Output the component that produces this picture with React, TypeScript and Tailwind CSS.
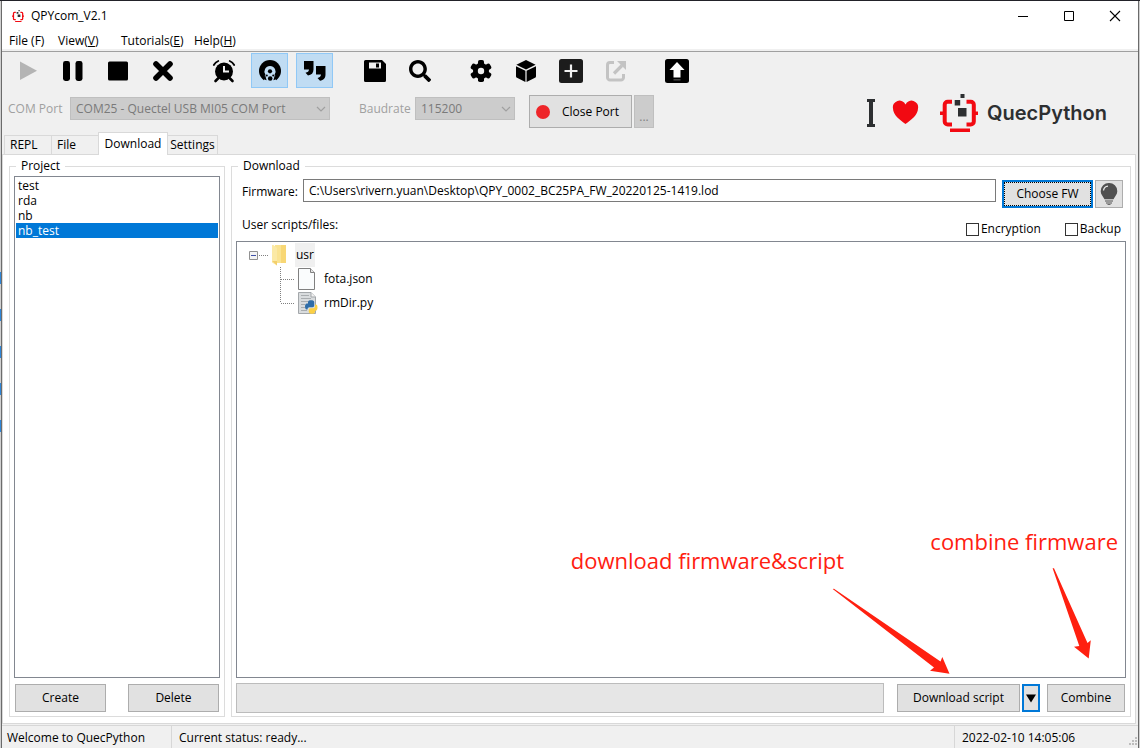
import { useState } from "react";
import type { ReactNode } from "react";
import { FaSearch } from "react-icons/fa";

const PUSH =
  "flex items-center justify-center border border-[#adadad] bg-[#e1e1e1] text-[12px] leading-4 whitespace-nowrap";

type Tool = { name: string; icon: ReactNode; active?: boolean; disabled?: boolean };

const PlayIcon = () => (
  <svg width="24" height="24" viewBox="0 0 24 24">
    <path d="M4 2.5v18.5l17-9.2z" fill="#b4b4b4" />
  </svg>
);
const PauseIcon = () => (
  <svg width="24" height="24" viewBox="0 0 24 24">
    <rect x="2" y="2" width="7" height="20" rx="2.4" />
    <rect x="14.5" y="2" width="7" height="20" rx="2.4" />
  </svg>
);
const StopIcon = () => (
  <svg width="24" height="24" viewBox="0 0 24 24">
    <rect x="2" y="2.5" width="20" height="19" rx="1.5" />
  </svg>
);
const CrossIcon = () => (
  <svg width="24" height="24" viewBox="0 0 24 24">
    <path d="M5 5l14 14M19 5L5 19" stroke="#000" strokeWidth="5.600" strokeLinecap="round" />
  </svg>
);
const AlarmIcon = () => (
  <svg width="24" height="24" viewBox="0 0 24 24">
    <circle cx="12" cy="12.500" r="9" />
    <path d="M6 19.500l-2.500 2.500M18 19.500l2.500 2.500" stroke="#000" strokeWidth="2.600" strokeLinecap="round" />
    <path d="M1.800 6a9 9 0 0 1 4.500-4M22.200 6a9 9 0 0 0-4.500-4" fill="none" stroke="#000" strokeWidth="1.800" strokeLinecap="round" />
    <path d="M12 7v5.500h5" fill="none" stroke="#f0f0f0" strokeWidth="2" />
  </svg>
);
const HeadIcon = () => (
  <svg width="24" height="24" viewBox="0 0 24 24">
    <circle cx="12" cy="12" r="11" />
    <path d="M12 7a5.600 5.600 0 0 0-4.600 8.800c-1.200 1.400-1.700 3-1.400 5.200V24h12v-3c.3-2.200-.2-3.800-1.400-5.200A5.600 5.600 0 0 0 12 7z" fill="#c0dcf3" />
    <path d="M7 15.500l1.600 5.800-3.800-1.300zM17 15.500l-1.600 5.800 3.800-1.300z" />
    <circle cx="12" cy="12.300" r="2.100" />
    <circle cx="8.800" cy="16.500" r="1" />
    <circle cx="15.200" cy="16.500" r="1" />
    <circle cx="12.200" cy="19.500" r="2.300" />
  </svg>
);
const QuotesIcon = () => (
  <svg width="24" height="24" viewBox="0 0 24 24">
    <path d="M1 2h9.500v8.500c0 3.500-2 5.500-5.500 6L2.500 13.700c2.300-.3 3.300-1.400 3.500-3.200H1zM13 7h9.500v8.500c0 3.500-2 5.800-5.500 6.300L14.500 19c2.300-.4 3.300-1.600 3.500-3.500h-5z" />
  </svg>
);
const SaveIcon = () => (
  <svg width="24" height="24" viewBox="0 0 24 24">
    <path d="M2.500 1H19l4 4v16.500a1.500 1.500 0 0 1-1.500 1.500h-19A1.500 1.500 0 0 1 1 21.500v-19A1.500 1.500 0 0 1 2.500 1z" />
    <path d="M6 3.500h12v6H6z" fill="#efefef" />
    <path d="M13 4.500h3v4h-3z" />
  </svg>
);
const GearIcon = () => (
  <svg width="24" height="24" viewBox="0 0 24 24">
    <circle cx="12" cy="12" r="8" />
    {[0, 60, 120].map((angle) => (
      <rect key={angle} x="9" y="1" width="6" height="22" rx="1.800" transform={`rotate(${angle} 12 12)`} />
    ))}
    <circle cx="12" cy="12" r="3.200" fill="#f0f0f0" />
  </svg>
);
const CubeIcon = () => (
  <svg width="24" height="24" viewBox="0 0 24 24">
    <path d="M12 1l9.600 4.800L12 10.500 2.400 5.800z" />
    <path d="M2 7.200l9.400 4.600V23L3 18.800a1.500 1.500 0 0 1-1-1.500zM22 7.200l-9.400 4.600V23l8.400-4.200a1.500 1.500 0 0 0 1-1.500z" />
  </svg>
);
const PlusIcon = () => (
  <svg width="24" height="24" viewBox="0 0 24 24">
    <rect width="24" height="24" rx="2.500" fill="#1c1c1c" />
    <path d="M12 5.500v13M5.500 12h13" stroke="#f0f0f0" strokeWidth="2.200" />
  </svg>
);
const ShareIcon = () => (
  <svg width="24" height="24" viewBox="0 0 24 24" fill="none" stroke="#c3c3c3">
    <path d="M10 3.500H6A2.500 2.500 0 0 0 3.500 6v12.500A2.500 2.500 0 0 0 6 21h11a2.500 2.500 0 0 0 2.500-2.500V15" strokeWidth="3" />
    <path d="M10 14.500L18 6.500" strokeWidth="3.200" />
    <path d="M13 2h9v9z" fill="#c3c3c3" stroke="none" />
  </svg>
);
const UploadIcon = () => (
  <svg width="24" height="24" viewBox="0 0 24 24">
    <rect width="24" height="24" rx="2.500" />
    <path d="M12 3l7.500 8h-4v7.500h-7V11h-4z" fill="#fff" />
    <path d="M8.500 20.800h7" stroke="#444" strokeWidth="1.500" />
  </svg>
);

const TOOL_GROUPS: Tool[][] = [
  [
    { name: "Run", icon: <PlayIcon />, disabled: true },
    { name: "Pause", icon: <PauseIcon /> },
    { name: "Stop", icon: <StopIcon /> },
    { name: "Clear", icon: <CrossIcon /> },
  ],
  [
    { name: "Timer", icon: <AlarmIcon /> },
    { name: "Connect", icon: <HeadIcon />, active: true },
    { name: "Quotes", icon: <QuotesIcon />, active: true },
  ],
  [
    { name: "Save", icon: <SaveIcon /> },
    { name: "Search", icon: <FaSearch size={22} /> },
  ],
  [
    { name: "Options", icon: <GearIcon /> },
    { name: "Package", icon: <CubeIcon /> },
    { name: "Add", icon: <PlusIcon /> },
    { name: "Export", icon: <ShareIcon />, disabled: true },
  ],
  [{ name: "Upload", icon: <UploadIcon /> }],
];

function BraceLogo({ className }: { className: string }) {
  return (
    <svg className={className} viewBox="0 0 38 38">
      <g fill="none" stroke="#f20a12" strokeWidth="4">
        <path d="M12 7.700H7.700a3 3 0 0 0-3 3V27.500a3 3 0 0 0 3 3H12" />
        <path d="M26.500 7.700h4.300a3 3 0 0 1 3 3V27.500a3 3 0 0 1-3 3H26.500" />
      </g>
      <path d="M0 17.500h4v3.500H0zM34 17.500h4v3.500h-4zM10 34.500h20v3.500H10z" fill="#f20a12" />
      <path d="M20.500 0h4v4h-4zM14.700 6h5.500v5.500h-5.500zM18 14h8.500v8.500H18z" fill="#2d2f31" />
    </svg>
  );
}

function DropDown({ id, value, className }: { id: string; value: string; className: string }) {
  return (
    <div className={`relative h-[23px] ${className}`}>
      <select
        id={id}
        disabled
        className="h-full w-full appearance-none border border-[#bfbfbf] bg-[#cccccc] pl-[5px] text-[12px] leading-4 text-[#7a7a7a] opacity-100"
      >
        <option>{value}</option>
      </select>
      <svg className="pointer-events-none absolute top-2 right-1 h-2 w-2.5" viewBox="0 0 10 8">
        <path d="M1 2l4 4 4-4" fill="none" stroke="#a0a0a0" strokeWidth="1.200" />
      </svg>
    </div>
  );
}

function Branch({ last }: { last?: boolean }) {
  return (
    <svg width="16" height="24" viewBox="0 0 16 24" stroke="#808080" strokeDasharray="1 1">
      <path d={last ? "M.5 0v12" : "M.5 0v24"} />
      <path d="M1 12.500h14" />
    </svg>
  );
}

function FolderIcon() {
  return (
    <svg width="14" height="22" viewBox="0 0 14 22">
      <path d="M3 1h11v18H3z" fill="#fae392" />
      <path d="M9 1h5v18H9z" fill="#f8d775" />
      <path d="M0 1h1.500l3.500 3v17.500L0 18.500z" fill="#fbe9a6" />
      <path d="M0 17l5 4.500V17z" fill="#f3cf6c" />
    </svg>
  );
}

function PageIcon() {
  return (
    <svg width="18" height="22" viewBox="0 0 18 22">
      <path d="M.5.500H12.500L16.500 4.500v17H.5z" fill="#fafcfd" stroke="#808080" />
      <path d="M12.500.500v4h4" fill="#e4e4e4" stroke="#808080" />
    </svg>
  );
}

function PythonFileIcon() {
  return (
    <svg width="20" height="22" viewBox="0 0 20 22">
      <path d="M.5.500H13L17.500 5v16.500H.5z" fill="#d9dcde" stroke="#a3a7aa" />
      <path d="M13 .500V5h4.500" fill="#f2f2f2" stroke="#a3a7aa" />
      <path d="M3 3.500h8M3 6.500h10M3 9.500h7M3 12.500h4M3 15.500h4M3 18.500h6" stroke="#a9adb0" />
      <path d="M10 11.500V10c0-1.200 1-1.800 3-1.800s3.200.6 3.200 1.800v3.500c0 1-.7 1.700-1.700 1.700h-3c-1.500 0-2 1-2 2.300H8.700c-1.200 0-1.700-1.500-1.700-3s.6-3 1.900-3z" fill="#2f6da8" />
      <path d="M17 12.500h.8c1.200 0 1.700 1.300 1.700 3s-.6 3.200-1.800 3.200H17V20c0 1.200-1.300 1.800-3 1.800s-3.200-.6-3.200-1.800v-2c0-1.200.7-1.800 1.800-1.800h2.700c1.200 0 1.700-.7 1.700-2z" fill="#fbd046" />
    </svg>
  );
}

function TitleBar() {
  return (
    <div className="flex h-[30px] items-center bg-white pl-2.5">
      <BraceLogo className="h-3 w-3" />
      <h1 className="ml-[7px] flex-1 text-[12px] leading-4">QPYcom_V2.1</h1>
      <div className="flex">
        <button aria-label="Minimize" className="flex w-[46px] justify-center">
          <svg width="12" height="12" viewBox="0 0 12 12">
            <path d="M1 6.500h10" stroke="#000" />
          </svg>
        </button>
        <button aria-label="Maximize" className="flex w-[46px] justify-center">
          <svg width="12" height="12" viewBox="0 0 12 12">
            <path d="M1.500 1.500h9v9h-9z" fill="none" stroke="#000" />
          </svg>
        </button>
        <button aria-label="Close" className="flex w-[46px] justify-center">
          <svg width="12" height="12" viewBox="0 0 12 12">
            <path d="M1 1l10 10M11 1L1 11" stroke="#000" strokeWidth="1.100" />
          </svg>
        </button>
      </div>
    </div>
  );
}

function MenuBar() {
  return (
    <nav className="flex h-[18px] items-end bg-white pl-[7px] text-[12px] leading-4">
      <button className="w-[49px] text-left whitespace-nowrap">File (F)</button>
      <button className="w-[63px] text-left">
        View(<u>V</u>)
      </button>
      <button className="w-[73px] text-left">
        Tutorials(<u>E</u>)
      </button>
      <button className="text-left">
        Help(<u>H</u>)
      </button>
    </nav>
  );
}

function Header() {
  return (
    <header className="flex justify-between">
      <div>
        <div className="flex gap-6 pl-2">
          {TOOL_GROUPS.map((group, i) => (
            <div key={i} className="flex gap-2">
              {group.map((tool) => (
                <button
                  key={tool.name}
                  aria-label={tool.name}
                  disabled={tool.disabled}
                  className={
                    tool.active
                      ? "flex h-[35px] w-[37px] items-center justify-center border border-[#90c8f6] bg-[#c0dcf3]"
                      : "flex h-[35px] w-[37px] items-center justify-center pr-0.5"
                  }
                >
                  {tool.icon}
                </button>
              ))}
            </div>
          ))}
        </div>
        <div className="flex items-start pt-[7px] pb-1 pl-1.5 text-[12px] leading-4">
          <div className="flex h-[27px] items-center text-[#a0a0a0]">
            <label htmlFor="port" className="w-[62px]">
              COM Port
            </label>
            <DropDown id="port" value="COM25 - Quectel USB MI05 COM Port" className="w-[260px]" />
            <label htmlFor="baud" className="ml-[29px] w-14">
              Baudrate
            </label>
            <DropDown id="baud" value="115200" className="w-[100px]" />
          </div>
          <button className="ml-3.5 flex h-[33px] w-[103px] items-center border border-[#adadad] bg-[#e1e1e1] pl-1.5">
            <span className="h-3.5 w-3.5 rounded-full bg-[#ee2529]" />
            <span className="flex-1 text-center">Close Port</span>
          </button>
          <button
            disabled
            aria-label="More"
            className="ml-0.5 flex h-[33px] w-5 items-end justify-center border border-[#bfbfbf] bg-[#cccccc] pb-0.5 text-[#838383]"
          >
            ...
          </button>
        </div>
      </div>
      <div className="flex h-[38px] items-center self-end pr-[31px]">
        <svg width="52" height="28" viewBox="0 0 52 28">
          <path d="M0 0h8v3H6v22h2v3H0v-3h2V3H0z" fill="#2d2f31" />
          <path
            d="M38.500 25C33 21 26 16 26 9.500a6.600 6.600 0 0 1 12.500-4A6.600 6.600 0 0 1 51 9.500c0 6.500-7 11.500-12.500 15.500z"
            fill="#f20a12"
          />
        </svg>
        <BraceLogo className="ml-[21px] h-[38px] w-[38px]" />
        <span className="ml-[9px] font-[Inter,sans-serif] text-[20px] leading-7 font-semibold text-[#2d2f31]">
          QuecPython
        </span>
      </div>
    </header>
  );
}

const TABS = [
  { name: "REPL", width: "w-12" },
  { name: "File", width: "w-12" },
  { name: "Download", width: "w-[70px]" },
  { name: "Settings", width: "w-[51px]" },
];

function Tabs() {
  return (
    <div role="tablist" className="flex h-[22px] items-end pl-0.5 text-[12px] leading-4">
      {TABS.map(({ name, width }) => (
        <button
          key={name}
          role="tab"
          aria-selected={name === "Download"}
          className={
            name === "Download"
              ? `${width} relative -mb-px -ml-px h-[23px] border border-b-0 border-[#d9d9d9] bg-white text-center`
              : `${width} -ml-px h-[19px] border border-b-0 border-[#d9d9d9] bg-[#f0f0f0] first:ml-0 ${
                  name === "Settings" ? "text-center" : "pl-[5px] text-left"
                }`
          }
        >
          {name}
        </button>
      ))}
    </div>
  );
}

function ProjectPanel() {
  const [selected, setSelected] = useState("nb_test");
  return (
    <fieldset className="flex w-[216px] min-w-0 shrink-0 flex-col border border-[#dcdcdc] px-1 pt-0.5 pb-1">
      <legend className="ml-0.5 px-[5px] text-[12px] leading-4">Project</legend>
      <ul role="listbox" aria-label="Project" className="flex-1 border border-[#828790] p-px">
        {["test", "rda", "nb", "nb_test"].map((name) => (
          <li
            key={name}
            role="option"
            aria-selected={name === selected}
            onClick={() => setSelected(name)}
            className={
              name === selected
                ? "h-[15px] bg-[#0078d7] pl-0.5 text-[12px] leading-[15px] text-white"
                : "h-[15px] pl-0.5 text-[12px] leading-[15px]"
            }
          >
            {name}
          </li>
        ))}
      </ul>
      <div className="mt-1.5 flex justify-between px-px">
        <button className={`${PUSH} h-7 w-[91px]`}>Create</button>
        <button className={`${PUSH} h-7 w-[91px]`}>Delete</button>
      </div>
    </fieldset>
  );
}

function FileTree() {
  return (
    <div className="relative flex-1 border border-[#828790] pt-px text-[12px] leading-4">
      <ul role="tree" aria-label="User scripts/files" className="pl-3">
        <li role="treeitem" aria-expanded="true">
          <div className="flex h-6 items-center">
            <svg width="20" height="9" viewBox="0 0 20 9">
              <path d="M.5.500h8v8h-8z" fill="#f4f4f4" stroke="#919191" />
              <path d="M2 4.500h5" stroke="#3f51a8" />
              <path d="M10 4.500h9" stroke="#808080" strokeDasharray="1 1" />
            </svg>
            <span className="ml-[3px]">
              <FolderIcon />
            </span>
            <span className="ml-[9px] flex h-6 w-5 items-center justify-center bg-[#f0f0f0]">usr</span>
          </div>
          <ul role="group" className="pl-[31px]">
            <li role="treeitem" className="flex h-6 items-center">
              <Branch />
              <span className="mr-2 ml-0.5 w-[18px]">
                <PageIcon />
              </span>
              fota.json
            </li>
            <li role="treeitem" className="flex h-6 items-center">
              <Branch last />
              <span className="mr-2 ml-0.5 w-[18px]">
                <PythonFileIcon />
              </span>
              rmDir.py
            </li>
          </ul>
        </li>
      </ul>
      <p className="absolute right-[281px] bottom-[101px] text-[22px] leading-8 whitespace-nowrap text-[#ff2010]">
        download firmware&amp;script
      </p>
      <p className="absolute right-[7px] bottom-[120px] text-[22px] leading-8 whitespace-nowrap text-[#ff2010]">
        combine firmware
      </p>
      <svg
        className="absolute right-[33px] bottom-0.5 h-[108px] w-[260px]"
        viewBox="832 567 260 108"
        fill="#ff2010"
      >
        <path d="M832.700 589L834 588.800L940.500 661.500L942.300 657L949.500 673.800L930 670.700L934 667.500Z" />
        <path d="M1052.600 568.300L1054 568.300L1087.500 643L1090.800 640.300L1088.700 658.500L1074 646.700L1079.300 646Z" />
      </svg>
    </div>
  );
}

function DownloadPanel() {
  return (
    <fieldset className="flex min-w-0 flex-1 flex-col border border-[#dcdcdc] px-1 pt-[5px] pb-[3px]">
      <legend className="ml-0.5 px-[5px] text-[12px] leading-4">Download</legend>
      <div className="flex h-[29px] items-center pr-[3px] text-[12px] leading-4">
        <label htmlFor="firmware" className="w-[67px] pb-1 pl-1.5">
          Firmware:
        </label>
        <input
          id="firmware"
          type="text"
          defaultValue="C:\Users\rivern.yuan\Desktop\QPY_0002_BC25PA_FW_20220125-1419.lod"
          className="h-[23px] min-w-0 flex-1 self-start border border-[#7a7a7a] bg-white px-[5px]"
        />
        <button className="ml-1.5 h-7 w-[91px] self-end border-2 border-[#0078d7] bg-[#e1e1e1]">
          <span className="flex h-full items-center justify-center border border-dotted border-black">Choose FW</span>
        </button>
        <button aria-label="Hint" className={`${PUSH} ml-0.5 h-7 w-7 self-end`}>
          <svg width="18" height="22" viewBox="0 0 18 22">
            <path d="M9 0a8.200 8.200 0 0 0-8.300 8.200c0 3.400 2.300 4.800 3.800 8h9c1.500-3.200 3.800-4.600 3.800-8A8.200 8.200 0 0 0 9 0z" fill="#505050" />
            <path d="M3.500 7.500a5 5 0 0 1 4.500-4.300" fill="none" stroke="#e8e8e8" strokeWidth="1.300" />
            <path d="M5 18h8M6 20h6M7.500 21.700h3" stroke="#505050" strokeWidth="1" />
          </svg>
        </button>
      </div>
      <div className="flex h-[33px] items-center pr-[5px] pl-1.5 text-[12px] leading-4">
        <span className="flex-1">User scripts/files:</span>
        <label className="flex h-6 items-center gap-0.5 self-end">
          <input type="checkbox" className="h-[13px] w-[13px] appearance-none border border-[#333] bg-white checked:bg-[#0078d7]" />
          Encryption
        </label>
        <label className="ml-6 flex h-6 items-center gap-0.5 self-end">
          <input type="checkbox" className="h-[13px] w-[13px] appearance-none border border-[#333] bg-white checked:bg-[#0078d7]" />
          Backup
        </label>
      </div>
      <FileTree />
      <div className="mt-[5px] flex items-center pr-px">
        <div role="progressbar" aria-label="Download progress" className="h-[30px] flex-1 border border-[#bcbcbc] bg-[#e6e6e6]" />
        <button className={`${PUSH} ml-[13px] h-7 w-[123px]`}>Download script</button>
        <button
          aria-label="Download options"
          className="ml-0.5 flex h-7 w-[18px] items-center justify-center border-2 border-[#0078d7] bg-[#e1e1e1]"
        >
          <svg width="10" height="9" viewBox="0 0 10 9">
            <path d="M0 .500h10L5 8.500z" />
          </svg>
        </button>
        <button className={`${PUSH} ml-[7px] h-7 w-[78px]`}>Combine</button>
      </div>
    </fieldset>
  );
}

function StatusBar() {
  return (
    <footer className="mt-px flex h-[23px] items-stretch border-t border-[#d7d7d7] text-[12px] leading-6">
      <span className="w-[170px] border-r border-[#d7d7d7] pl-[5px] whitespace-nowrap">Welcome to QuecPython</span>
      <span className="flex-1 pl-[7px]">Current status: ready...</span>
      <span className="w-[184px] border-l border-[#d7d7d7] pl-[7px]">2022-02-10 14:05:06</span>
      <svg className="mb-0.5 -ml-[9px] shrink-0 self-end" width="9" height="9" viewBox="0 0 9 9" fill="#bdbdbd">
        <path d="M6 0h2v2H6zM3 3h2v2H3zM6 3h2v2H6zM0 6h2v2H0zM3 6h2v2H3zM6 6h2v2H6z" />
      </svg>
    </footer>
  );
}

export default function App() {
  return (
    <div className="flex min-h-screen flex-col border-t border-[#222229] bg-[#f0f0f0] font-['Open_Sans','Noto_Sans',sans-serif] text-black">
      <div className="flex flex-1">
        <div className="flex w-px flex-col gap-[25px] bg-[#d0d0d0] pt-[271px]">
          {[0, 1, 2, 3, 4].map((i) => (
            <span key={i} className="h-3 bg-[#2f86d8]" />
          ))}
        </div>
        <main className="flex min-w-0 flex-1 flex-col border-x border-[#6b6b6b]">
          <TitleBar />
          <MenuBar />
          <div className="mb-px h-[3px] border-b border-[#a0a0a0]" />
          <Header />
          <Tabs />
          <section className="mr-0.5 flex flex-1 gap-1.5 border border-[#d9d9d9] bg-white pt-[3px] pr-1 pb-1.5 pl-1.5">
            <ProjectPanel />
            <DownloadPanel />
          </section>
          <StatusBar />
        </main>
        <div className="w-px bg-[#d0d0d0]" />
      </div>
    </div>
  );
}
